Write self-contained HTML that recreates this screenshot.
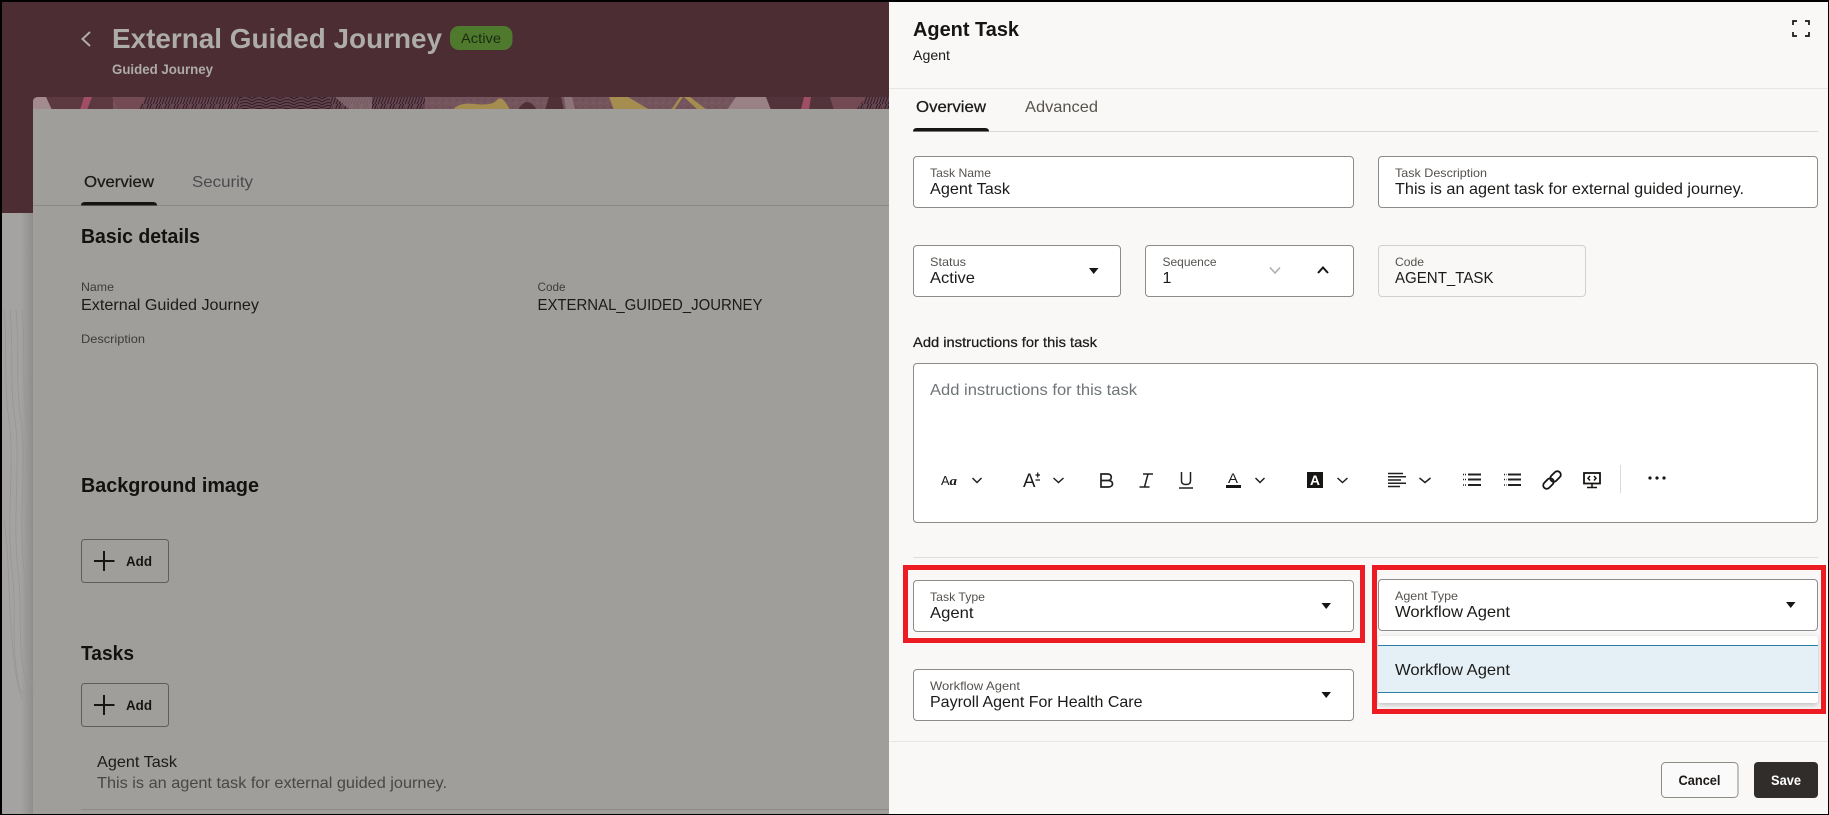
<!DOCTYPE html>
<html lang="en"><head><meta charset="utf-8"><title>Agent Task</title>
<style>
html,body{margin:0;padding:0;background:#000;width:1829px;height:815px;overflow:hidden}
svg{display:block;position:absolute;left:0;top:0}
text{font-family:"Liberation Sans",sans-serif;font-size:16px;fill:#1b1a18}
.b{font-weight:700}
.l{font-size:12px;fill:#55524e}
.m{stroke:#1b1a18;stroke-width:.25}
.dl{font-size:12px;fill:#3d3c3a}
.dv{fill:#1c1b19}
</style></head><body>
<svg width="1829" height="815" viewBox="0 0 1829 815" xmlns="http://www.w3.org/2000/svg">
<defs>
<pattern id="tex" width="9" height="13" patternUnits="userSpaceOnUse">
<rect width="9" height="13" fill="#654450"/>
<path d="M0 13C3 8 2 4 5 0M3 13C6 8 5 4 8 0M6 13C9 8 8 4 11 0" stroke="#2e1c24" stroke-width="1" fill="none"/>
</pattern>
<pattern id="tex2" width="14" height="12" patternUnits="userSpaceOnUse">
<rect width="14" height="12" fill="#63424c"/>
<path d="M0 3Q7 -2 14 3M0 6Q7 1 14 6M0 9Q7 4 14 9M0 12Q7 7 14 12" stroke="#2e1c24" stroke-width="1" fill="none"/>
</pattern>
<pattern id="mot" width="7" height="7" patternUnits="userSpaceOnUse">
<rect width="7" height="7" fill="#75555d"/>
<circle cx="2" cy="2" r="1" fill="#6b4a53"/><circle cx="5" cy="5" r=".8" fill="#7f5f67"/>
</pattern>
<linearGradient id="sh" x1="0" x2="1" y1="0" y2="0"><stop offset="0" stop-color="#a5a4a2"/><stop offset="1" stop-color="#8f8e8c"/></linearGradient>
<filter id="ds" x="-5%" y="-20%" width="110%" height="140%"><feDropShadow dx="0" dy="2" stdDeviation="3" flood-color="#000" flood-opacity=".25"/></filter>
</defs>

<!-- Frame -->
<rect width="1829" height="815" fill="#000"/>

<!-- LEFT PAGE -->
<rect x="2" y="2" width="887" height="812" fill="#a4a3a1"/>
<rect x="2" y="2" width="887" height="211" fill="#4b2d33"/>
<rect x="20" y="213" width="13" height="601" fill="url(#sh)"/>
<g fill="none" stroke="#979694" stroke-width=".8">
<path d="M4 310C8 350 3 380 9 420S6 520 12 570 8 640 22 700"/>
<path d="M10 310C14 350 9 380 15 420S12 520 18 570 14 640 30 700"/>
<path d="M16 310C20 350 15 380 21 420S18 520 24 570 20 640 33 690"/>
<path d="M22 310C26 350 21 380 27 420S24 520 30 570"/>
<path d="M4 520C10 560 8 610 14 660S22 680 30 700"/>
</g>

<!-- banner strip -->
<g>
<clipPath id="cb"><path d="M33 110V102Q33 97 38 97H889V110Z"/></clipPath>
<g clip-path="url(#cb)">
<rect x="33" y="97" width="856" height="13" fill="url(#mot)"/>
<rect x="33" y="97" width="20" height="13" fill="#a28a8e"/>
<path d="M46 97H113V110H52Z" fill="#5c3941"/>
<path d="M84 97H92L87 110H80Z" fill="#a04d66"/>
<path d="M112 97H146L138 110H118Z" fill="#744b55"/>
<path d="M146 97H425V110H138Z" fill="url(#tex)"/>
<rect x="240" y="97" width="90" height="13" fill="url(#tex2)"/>
<path d="M335 97H372V110H350Z" fill="#8d7479" opacity=".7"/>
<path d="M453 110Q458 102 475 104T497 100T510 110Z" fill="#a58c4f"/>
<path d="M518 110Q527 94 537 110Z" fill="#4f3037"/>
<path d="M549 97H561L564 110H545Z" fill="#4f3037"/>
<path d="M564 97H572L575 110H566Z" fill="#8c747a"/>
<path d="M609 97H628L650 110H614Z" fill="#a58c4f"/>
<path d="M680 97H683L674 110H671Z" fill="#a58c4f"/>
<path d="M684 97H690L707 110H698Z" fill="#a58c4f"/>
<path d="M736 97H766L771 110H727Z" fill="#9a8186"/>
<path d="M766 97H804L801 110H771Z" fill="#53333b"/>
<path d="M804 97H811L809 110H801Z" fill="#a04d66"/>
<path d="M811 97H830L834 110H809Z" fill="#53333b"/>
<path d="M830 97H866L861 110H834Z" fill="#734a54"/>
<path d="M866 97H889V110H856Z" fill="url(#tex)"/>
</g>
</g>

<!-- card -->
<rect x="33" y="109" width="856" height="705" fill="#9f9e9b"/>

<!-- title -->
<path d="M90 32L82.500 39L90 46" fill="none" stroke="#aeabab" stroke-width="2"/>
<text x="112" y="48" class="b" style="font-size:28px;fill:#aeabab" textLength="330" lengthAdjust="spacingAndGlyphs">External Guided Journey</text>
<rect x="450" y="26" width="62.500" height="24" rx="9" fill="#4f7a2e"/>
<text x="461" y="43" style="font-size:14px;fill:#1b2a10" textLength="40" lengthAdjust="spacingAndGlyphs">Active</text>
<text x="112" y="74" class="b" style="font-size:14px;fill:#aeabab" textLength="101" lengthAdjust="spacingAndGlyphs">Guided Journey</text>

<!-- left tabs -->
<text x="84" y="187" class="m" textLength="70" lengthAdjust="spacingAndGlyphs">Overview</text>
<text x="192" y="187" style="fill:#4b4b4f" textLength="61" lengthAdjust="spacingAndGlyphs">Security</text>
<rect x="33" y="205" width="856" height="1" fill="#8b8a88"/>
<path d="M81 205.500Q81 202 85 202H153Q157 202 157 205.500Z" fill="#161513"/>

<text x="81" y="243" class="b" style="font-size:20px;fill:#131210" textLength="119" lengthAdjust="spacingAndGlyphs">Basic details</text>
<text x="81" y="291" class="dl" textLength="33" lengthAdjust="spacingAndGlyphs">Name</text>
<text x="81" y="310" class="dv" textLength="178" lengthAdjust="spacingAndGlyphs">External Guided Journey</text>
<text x="537.500" y="291" class="dl" textLength="28" lengthAdjust="spacingAndGlyphs">Code</text>
<text x="537.500" y="310" class="dv" textLength="225" lengthAdjust="spacingAndGlyphs">EXTERNAL_GUIDED_JOURNEY</text>
<text x="81" y="343" class="dl" textLength="64" lengthAdjust="spacingAndGlyphs">Description</text>

<text x="81" y="492" class="b" style="font-size:20px;fill:#131210" textLength="178" lengthAdjust="spacingAndGlyphs">Background image</text>
<rect x="81.500" y="539.500" width="87" height="43" rx="3" fill="none" stroke="#5f5e5c"/>
<path d="M104 551V571M94 561H114.500" stroke="#161513" stroke-width="2" fill="none"/>
<text x="126" y="566" class="b" style="font-size:14px;fill:#161513" textLength="26" lengthAdjust="spacingAndGlyphs">Add</text>

<text x="81" y="660" class="b" style="font-size:20px;fill:#131210" textLength="53" lengthAdjust="spacingAndGlyphs">Tasks</text>
<rect x="81.500" y="683.500" width="87" height="43" rx="3" fill="none" stroke="#5f5e5c"/>
<path d="M104 695V715M94 705H114.500" stroke="#161513" stroke-width="2" fill="none"/>
<text x="126" y="710" class="b" style="font-size:14px;fill:#161513" textLength="26" lengthAdjust="spacingAndGlyphs">Add</text>

<text x="97" y="767" class="dv" textLength="80" lengthAdjust="spacingAndGlyphs">Agent Task</text>
<text x="97" y="788" style="fill:#484745" textLength="350" lengthAdjust="spacingAndGlyphs">This is an agent task for external guided journey.</text>
<rect x="81" y="809" width="808" height="1" fill="#8b8a88"/>

<!-- RIGHT PANEL -->
<rect x="889" y="2" width="939" height="812" fill="#f9f8f6"/>
<text x="913" y="36" class="b" style="font-size:20px;fill:#161513" textLength="106" lengthAdjust="spacingAndGlyphs">Agent Task</text>
<text x="913" y="60" style="font-size:14px" textLength="37" lengthAdjust="spacingAndGlyphs">Agent</text>
<path d="M1793 25V21H1797M1805 21H1809V25M1793 32V36H1797M1805 36H1809V32" fill="none" stroke="#161513" stroke-width="1.700"/>
<rect x="889" y="88" width="939" height="1" fill="#e8e6e3"/>

<text x="916" y="112" class="m" textLength="70" lengthAdjust="spacingAndGlyphs">Overview</text>
<text x="1025" y="112" style="fill:#57544f" textLength="73" lengthAdjust="spacingAndGlyphs">Advanced</text>
<rect x="913" y="131" width="905" height="1" fill="#dcdad7"/>
<path d="M913 131.500Q913 128 917 128H985Q989 128 989 131.500Z" fill="#161513"/>

<g fill="#fff" stroke="#8d8b88">
<rect x="913.500" y="156.500" width="440" height="51" rx="3.500"/>
<rect x="1378.500" y="156.500" width="439" height="51" rx="3.500"/>
<rect x="913.500" y="245.500" width="207" height="51" rx="3.500"/>
<rect x="1145.500" y="245.500" width="208" height="51" rx="3.500"/>
<rect x="1378.500" y="245.500" width="207" height="51" rx="3.500" fill="#f9f8f6" stroke="#d2d0cd"/>
<rect x="913.500" y="363.500" width="904" height="159" rx="3.500"/>
<rect x="913.500" y="580.500" width="440" height="51" rx="3.500"/>
<rect x="1378.500" y="579.500" width="439" height="51" rx="3.500"/>
<rect x="913.500" y="669.500" width="440" height="51" rx="3.500"/>
</g>

<text x="930" y="177" class="l" textLength="61" lengthAdjust="spacingAndGlyphs">Task Name</text>
<text x="930" y="194" textLength="80" lengthAdjust="spacingAndGlyphs">Agent Task</text>
<text x="1395" y="177" class="l" textLength="92" lengthAdjust="spacingAndGlyphs">Task Description</text>
<text x="1395" y="194" textLength="349" lengthAdjust="spacingAndGlyphs">This is an agent task for external guided journey.</text>

<text x="930" y="266" class="l" textLength="36" lengthAdjust="spacingAndGlyphs">Status</text>
<text x="930" y="283" textLength="45" lengthAdjust="spacingAndGlyphs">Active</text>
<path d="M1089 268H1098.500L1093.700 274Z" fill="#161513"/>
<text x="1162.500" y="266" class="l" textLength="54" lengthAdjust="spacingAndGlyphs">Sequence</text>
<text x="1162.500" y="283">1</text>
<path d="M1270 267.500L1275 273L1280 267.500" fill="none" stroke="#aeaca9" stroke-width="1.500"/>
<path d="M1318 273L1323 267.500L1328 273" fill="none" stroke="#161513" stroke-width="2"/>
<text x="1395" y="266" class="l" textLength="29" lengthAdjust="spacingAndGlyphs">Code</text>
<text x="1395" y="283" textLength="98.500" lengthAdjust="spacingAndGlyphs">AGENT_TASK</text>

<text x="913" y="347" class="m" style="font-size:14px" textLength="184" lengthAdjust="spacingAndGlyphs">Add instructions for this task</text>
<text x="930" y="395" style="fill:#6f7577" textLength="207" lengthAdjust="spacingAndGlyphs">Add instructions for this task</text>

<!-- Toolbar -->
<g fill="none" stroke="#222120" stroke-width="1.500">
<path d="M972.500 478L977 482.500L981.500 478"/>
<path d="M1053.500 478L1058.500 482.500L1063.500 478"/>
<path d="M1255.500 478L1260 482.500L1264.500 478"/>
<path d="M1337.500 478L1342.500 482.500L1347.500 478"/>
<path d="M1419.500 478L1425 482.500L1430.500 478"/>
</g>
<text x="941" y="485" style="font-size:13px" textLength="8.500" lengthAdjust="spacingAndGlyphs">A</text>
<text x="949.500" y="485" style="font-size:13px;font-family:'Liberation Serif',serif;font-style:italic;font-weight:700" textLength="7.500" lengthAdjust="spacingAndGlyphs">a</text>
<text x="1023" y="487" style="font-size:19px" textLength="12.500" lengthAdjust="spacingAndGlyphs">A</text>
<path d="M1035.500 475H1040M1037.750 472.500V477.500M1035.500 480H1040" stroke="#161513" stroke-width="1.200" fill="none"/>
<!-- B I U -->
<path d="M1101 480.500H1107.500C1110 480.500 1111.300 479 1111.300 477.200S1110 474 1107.500 474H1101V487H1108C1110.800 487 1112.500 485.600 1112.500 483.700S1110.800 480.500 1108 480.500" fill="none" stroke="#222120" stroke-width="1.700"/>
<path d="M1143 474H1153M1139.500 487H1149.500M1148 474L1144.500 487" fill="none" stroke="#222120" stroke-width="1.500"/>
<path d="M1181.500 472V481Q1181.500 484.500 1186 484.500T1190.500 481V472M1179 488H1193" fill="none" stroke="#222120" stroke-width="1.500"/>
<!-- font colour -->
<text x="1228" y="483" style="font-size:14px" textLength="10" lengthAdjust="spacingAndGlyphs">A</text>
<rect x="1226" y="485" width="15" height="3" fill="#161513"/>
<!-- background colour -->
<rect x="1307" y="472" width="16" height="16" fill="#161513"/>
<text x="1310" y="485" class="b" style="font-size:14px;fill:#fff" textLength="10" lengthAdjust="spacingAndGlyphs">A</text>
<!-- align -->
<path d="M1388 473.500H1403M1388 476.800H1406M1388 480H1401M1388 483.300H1406M1388 486.500H1400" stroke="#222120" stroke-width="1.500" fill="none"/>
<!-- lists -->
<path d="M1468 474.500H1481M1468 479.500H1481M1468 485H1481M1508 474.500H1521M1508 479.500H1521M1508 485H1521" stroke="#222120" stroke-width="2" fill="none"/>
<path d="M1463 474.500H1466M1463 479.500H1466M1463 485H1466M1504 474.500H1506.500M1504 479.500H1506.500M1504 485H1506.500" stroke="#222120" stroke-width="1.500" fill="none" stroke-dasharray="1 1"/>
<!-- link -->
<g fill="none" stroke="#161513" stroke-width="1.800" transform="rotate(-45 1552 480)">
<rect x="1541" y="476.500" width="12" height="7" rx="3.500"/>
<rect x="1551" y="476.500" width="12" height="7" rx="3.500"/>
</g>
<!-- monitor -->
<rect x="1584" y="473" width="16" height="10.500" fill="none" stroke="#161513" stroke-width="1.800"/>
<path d="M1590 476L1588 478.200L1590 480.500M1594 476L1596 478.200L1594 480.500M1592 484V487.500M1587 487.500H1597" fill="none" stroke="#161513" stroke-width="1.500"/>
<rect x="1620" y="465" width="1" height="28" fill="#dcdad7"/>
<g fill="#161513"><circle cx="1650" cy="478" r="1.600"/><circle cx="1657" cy="478" r="1.600"/><circle cx="1664" cy="478" r="1.600"/></g>

<rect x="913" y="557" width="905" height="1" fill="#dfddda"/>

<!-- Task Type -->
<text x="930" y="601" class="l" textLength="55" lengthAdjust="spacingAndGlyphs">Task Type</text>
<text x="930" y="618" textLength="43.500" lengthAdjust="spacingAndGlyphs">Agent</text>
<path d="M1321.500 603H1331L1326.200 609Z" fill="#161513"/>

<!-- Agent Type -->
<text x="1395" y="600" class="l" textLength="63" lengthAdjust="spacingAndGlyphs">Agent Type</text>
<text x="1395" y="617" textLength="115" lengthAdjust="spacingAndGlyphs">Workflow Agent</text>
<path d="M1786 602H1795.500L1790.700 608Z" fill="#161513"/>

<!-- Workflow Agent -->
<text x="930" y="690" class="l" textLength="90" lengthAdjust="spacingAndGlyphs">Workflow Agent</text>
<text x="930" y="707" textLength="212.500" lengthAdjust="spacingAndGlyphs">Payroll Agent For Health Care</text>
<path d="M1321.500 692H1331L1326.200 698Z" fill="#161513"/>

<!-- Dropdown -->
<rect x="1378" y="636" width="440" height="67" rx="3" fill="#fff" filter="url(#ds)"/>
<rect x="1378" y="645" width="440" height="48" fill="#e4f0f6"/>
<rect x="1378" y="645" width="440" height="1" fill="#2a7fa3"/>
<rect x="1378" y="692" width="440" height="1" fill="#2a7fa3"/>
<text x="1395" y="675" textLength="115" lengthAdjust="spacingAndGlyphs">Workflow Agent</text>

<!-- Red highlights -->
<rect x="905.500" y="567.500" width="457" height="73" fill="none" stroke="#ed1c24" stroke-width="5"/>
<rect x="1374.500" y="567.500" width="449" height="144" fill="none" stroke="#ed1c24" stroke-width="5"/>

<!-- Footer -->
<rect x="889" y="741" width="939" height="1" fill="#e8e6e3"/>
<rect x="1661.500" y="762.500" width="76.500" height="35" rx="4" fill="#fbfafa" stroke="#8d8b88"/>
<text x="1678.500" y="785" class="b" style="font-size:14px" textLength="42" lengthAdjust="spacingAndGlyphs">Cancel</text>
<rect x="1754" y="762" width="64" height="36" rx="4" fill="#312d2a"/>
<text x="1771" y="785" class="b" style="font-size:14px;fill:#fff" textLength="30" lengthAdjust="spacingAndGlyphs">Save</text>
</svg>
</body></html>
